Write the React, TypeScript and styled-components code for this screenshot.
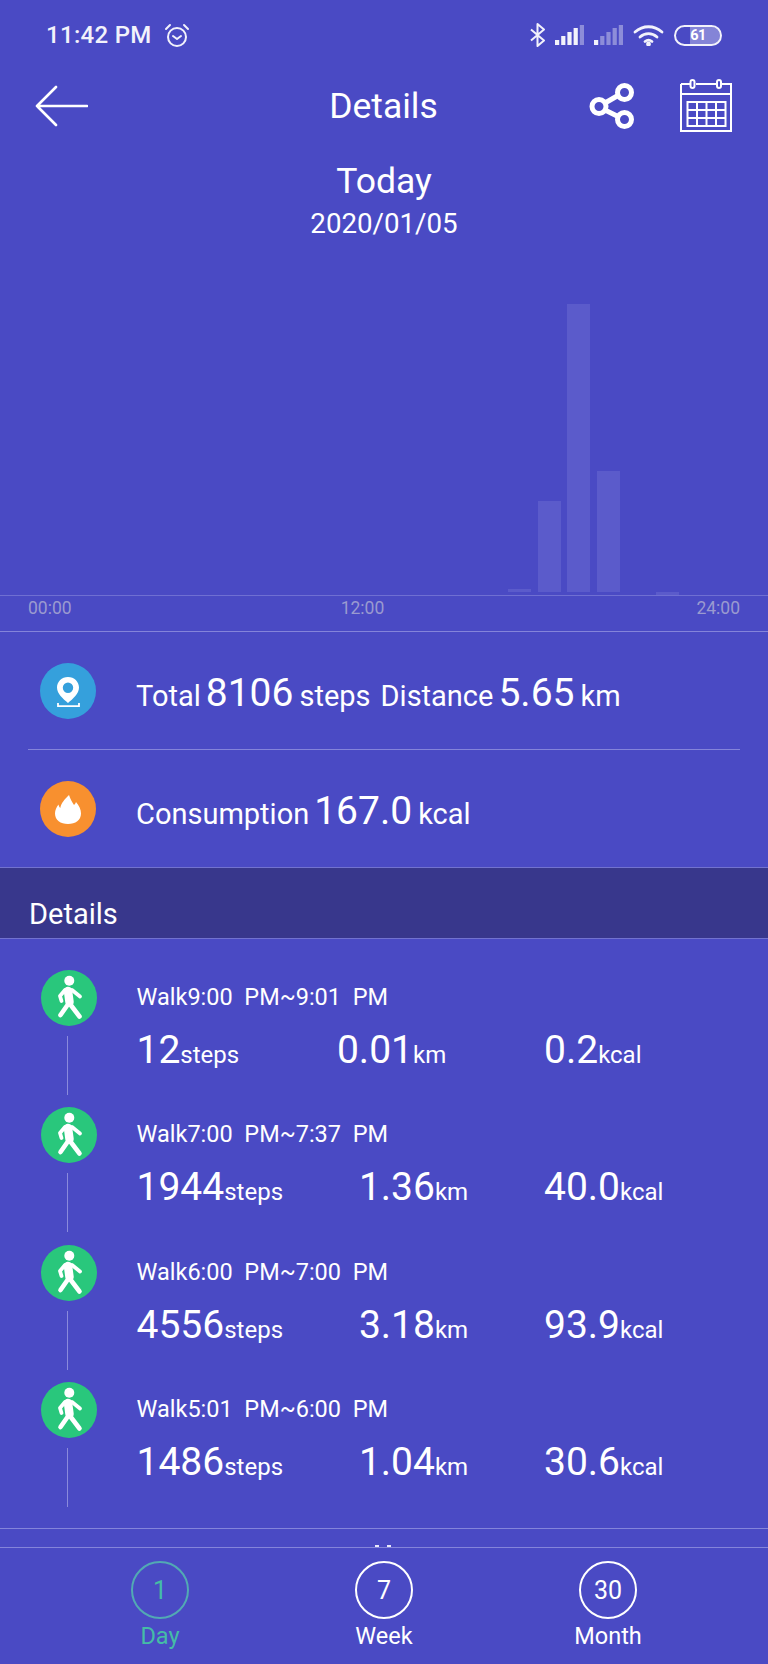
import React from 'react'
import styled, { createGlobalStyle } from 'styled-components'

const GlobalStyle = createGlobalStyle`
  html, body {
    margin: 0;
    padding: 0;
    background: #4a4ac4;
  }
  * {
    box-sizing: border-box;
  }
`

const Page = styled.div`
  width: 768px;
  height: 1664px;
  display: flex;
  flex-direction: column;
  overflow: hidden;
  background: #4a4ac4;
  color: #fff;
  font-family: Roboto, "Liberation Sans", sans-serif;
`

// status bar
const StatusBar = styled.div`
  height: 70px;
  flex: none;
  display: flex;
  align-items: center;
  justify-content: space-between;
  padding: 0 46px 0 46px;
`

const StatusLeft = styled.div`
  display: flex;
  align-items: center;
  gap: 12px;
`

const StatusTime = styled.span`
  font-size: 24px;
  font-weight: 500;
  letter-spacing: 0.3px;
  color: #f2f2fb;
`

const StatusRight = styled.div`
  display: flex;
  align-items: center;
  gap: 10px;
`

const Battery = styled.div`
  position: relative;
  width: 48px;
  height: 21px;
  border: 2.5px solid #f2f2fb;
  border-radius: 11px;
  overflow: hidden;
  display: flex;
  align-items: center;
  justify-content: center;
`

const BatteryFill = styled.div`
  position: absolute;
  top: 0;
  bottom: 0;
  left: 14px;
  right: 0;
  background: rgba(255, 255, 255, 0.32);
`

const BatteryLevel = styled.span`
  position: relative;
  top: 1px;
  font-size: 14.5px;
  font-weight: 700;
  letter-spacing: -0.6px;
  line-height: 1;
`

// title bar
const Header = styled.header`
  height: 71px;
  flex: none;
  display: grid;
  grid-template-columns: 1fr auto 1fr;
  align-items: center;
  padding: 0 36px 0 35px;
`

const HeaderTitle = styled.h1`
  margin: 0;
  font-size: 35.5px;
  font-weight: 400;
`

const HeaderActions = styled.div`
  display: flex;
  justify-content: flex-end;
  align-items: center;
  gap: 46px;
`

// day block
const DayBlock = styled.div`
  flex: none;
  height: 100px;
  padding-top: 17px;
  display: flex;
  flex-direction: column;
  align-items: center;
`

const DayName = styled.div`
  font-size: 35.5px;
  line-height: 46px;
`

const DayDate = styled.div`
  font-size: 27.7px;
  line-height: 36px;
  margin-top: 2px;
`

// chart
const Plot = styled.div`
  height: 355px;
  flex: none;
  display: flex;
  align-items: flex-end;
  padding: 0 26px 0 30px;
  border-bottom: 1px solid #6f6fd2;
`

const Slot = styled.div`
  flex: 1;
  display: flex;
  justify-content: center;
`

const Bar = styled.div<{ $height: number; $lift: number }>`
  width: 23px;
  height: ${({ $height }) => $height}px;
  margin-bottom: ${({ $lift }) => $lift}px;
  background: #5b5bcb;
`

const AxisLabels = styled.div`
  height: 36px;
  flex: none;
  display: flex;
  justify-content: space-between;
  padding: 0 28px;
  font-size: 17.5px;
  line-height: 24px;
  color: #9a9ad0;
  border-bottom: 1px solid #8484da;
`

const AxisMiddle = styled.span`
  margin-right: 43px;
`

// totals
const SummaryRow = styled.div`
  height: 117px;
  flex: none;
  display: flex;
  align-items: center;
  padding-left: 12px;
  margin: 0 28px;
  gap: 41px;
  & + & {
    height: 118px;
    border-top: 1px solid #8484da;
  }
`

const Badge = styled.div<{ $color: string }>`
  width: 56px;
  height: 56px;
  flex: none;
  border-radius: 50%;
  background: ${({ $color }) => $color};
  display: flex;
  align-items: center;
  justify-content: center;
`

const SummaryText = styled.div`
  font-size: 29px;
  display: flex;
  align-items: baseline;
  white-space: pre;
  margin-left: -1px;
  padding-top: 4px;
`

const SummaryValue = styled.span`
  font-size: 39px;
  margin: 0 6px 0 5px;
`

const SummarySpacer = styled.span`
  width: 10px;
`

const SectionBar = styled.div`
  height: 72px;
  flex: none;
  display: flex;
  align-items: flex-end;
  padding: 0 0 3px 29px;
  font-size: 29px;
  line-height: 42px;
  background: #38378c;
  border-top: 1px solid #7272cf;
  border-bottom: 1px solid #7272cf;
`

// walk list
const WalkList = styled.div`
  flex: 1;
  min-height: 0;
  overflow: hidden;
  padding-top: 31px;
`

const WalkRow = styled.div`
  height: 137.4px;
  display: flex;
  padding-left: 40px;
`

const WalkRail = styled.div`
  width: 57px;
  flex: none;
  display: flex;
  flex-direction: column;
  align-items: center;
  gap: 10px;
`

const WalkLine = styled.div`
  width: 1px;
  height: 59px;
  margin-right: 3px;
  background: #8a8adc;
`

const WalkBody = styled.div`
  flex: 1;
  padding: 11px 44px 0 39.5px;
`

const WalkTitle = styled.div`
  font-size: 23.5px;
  line-height: 32px;
  white-space: pre;
`

const WalkStats = styled.div`
  display: flex;
  align-items: baseline;
  margin-top: 14px;
`

const WalkStat = styled.div<{ $last?: boolean }>`
  flex: ${({ $last }) => ($last ? '0 0 180px' : '1 1 auto')};
  white-space: nowrap;
  font-size: 39px;
  line-height: 46px;
  small {
    font-size: 24px;
  }
`

const ListEnd = styled.div`
  height: 19px;
  margin-top: -1px;
  display: flex;
  justify-content: center;
  align-items: flex-end;
  gap: 8px;
  padding-right: 2px;
  border-top: 1px solid #8484da;
`

const ListEndTip = styled.span`
  width: 4px;
  height: 2px;
  background: #e8e8fa;
`

// period tabs
const TabBar = styled.nav`
  height: 117px;
  flex: none;
  display: grid;
  grid-template-columns: repeat(3, 224px);
  justify-content: center;
  padding-top: 13px;
  border-top: 1px solid #8484da;
`

const Tab = styled.div<{ $active?: boolean }>`
  display: flex;
  flex-direction: column;
  align-items: center;
  color: ${({ $active }) => ($active ? '#45bca6' : '#fff')};
`

const TabCircle = styled.div<{ $active?: boolean }>`
  width: 58px;
  height: 58px;
  border-radius: 50%;
  border: 2px solid ${({ $active }) => ($active ? '#52a9b4' : '#fff')};
  display: flex;
  align-items: center;
  justify-content: center;
  font-size: 25px;
`

const TabLabel = styled.div`
  font-size: 23.5px;
  line-height: 32px;
  margin-top: 1px;
`

const AlarmIcon = () => (
  <svg width="26" height="25" viewBox="0 0 26 25" fill="none" stroke="#f2f2fb" strokeWidth="2" strokeLinecap="round" strokeLinejoin="round">
    <circle cx="13" cy="14" r="9" />
    <path d="M9 13l4 3 4-3" />
    <path d="M2 6l4-4M24 6l-4-4" />
  </svg>
)

const BluetoothIcon = () => (
  <svg width="15" height="24" viewBox="0 0 15 24" fill="none" stroke="#f2f2fb" strokeWidth="2" strokeLinejoin="round">
    <path d="M1 6.5l13 11-6.5 5.5V1L14 6.5 1 17.500" />
  </svg>
)

const SignalIcon = ({ solid }: { solid: number }) => (
  <svg width="29" height="20" viewBox="0 0 29 20" fill="#f2f2fb">
    {[5, 9, 13, 17, 20].map((h, i) => (
      <rect key={i} x={i * 6.2} y={20 - h} width="4.200" height={h} opacity={i < solid ? 1 : 0.4} />
    ))}
  </svg>
)

const WifiIcon = () => (
  <svg width="31" height="21" viewBox="0 0 31 21" fill="none" stroke="#f2f2fb" strokeWidth="2.800" strokeLinecap="round">
    <path d="M2 7c8-7 19-7 27 0" />
    <path d="M7 12c5-4.500 12-4.500 17 0" />
    <path d="M12 16.500c2-1.500 5-1.500 7 0" />
    <circle cx="15.500" cy="19" r="1" fill="#f2f2fb" />
  </svg>
)

const BackIcon = () => (
  <svg width="53" height="42" viewBox="0 0 53 42" fill="none" stroke="#fff" strokeWidth="2.600" strokeLinecap="round" strokeLinejoin="round" style={{ display: 'block' }}>
    <path d="M2 21h50M21 2L2 21l19 19" />
  </svg>
)

const ShareIcon = () => (
  <svg width="45" height="46" viewBox="0 0 45 46" fill="none" stroke="#fff" strokeWidth="5">
    <path d="M16 20L29 12.500M16 27l13 6.500" />
    <circle cx="35.500" cy="9.500" r="7" />
    <circle cx="10" cy="23.500" r="7" />
    <circle cx="35.500" cy="36.500" r="7" />
  </svg>
)

const CalendarIcon = () => (
  <svg width="52" height="53" viewBox="0 0 52 53" fill="none" stroke="#fff" strokeWidth="2">
    <path d="M1 5h9M16 5h20M42 5h9v47H1V5" />
    <path d="M1 15h50" />
    <rect x="10.500" y="1" width="4" height="8" rx="2" />
    <rect x="37" y="1" width="4" height="8" rx="2" />
    <path d="M7.500 23h38v24h-38zM7.500 31h38M7.500 39h38M17 23v24M26.500 23v24M36 23v24" />
  </svg>
)

const PinIcon = () => (
  <svg width="56" height="56" viewBox="0 0 56 56" fill="none">
    <path fillRule="evenodd" fill="#fff" d="M28 14c6.300 0 11 4.800 11 10.600 0 6-6 11.400-11 15.400-5-4-11-9.400-11-15.400C17 18.800 21.700 14 28 14zm0 5.500a5.200 5.200 0 100 10.400 5.200 5.200 0 000-10.400z" />
    <path d="M18 40v3.200h21V40" stroke="#fff" strokeWidth="1.800" />
  </svg>
)

const FlameIcon = () => (
  <svg width="56" height="56" viewBox="0 0 56 56">
    <path fill="#fff" d="M29 14c1.500 4.500 3 7 5 10 1-.8 1.500-1.800 2-3 3 3.500 5 7.500 5 11.500C41 39 35.500 43 28 43s-13-4-13-10.500c0-3.500 1.500-6.500 3.500-9 .3 1.500.8 2.700 1.800 3.500C21 22 25 18 29 14z" />
  </svg>
)

const WalkerIcon = () => (
  <svg width="56" height="56" viewBox="0 0 56 56" fill="none" stroke="#fff" strokeLinecap="round" strokeLinejoin="round">
    <circle cx="28.300" cy="10.700" r="5" fill="#fff" stroke="none" />
    <path d="M27 21L28.500 32" strokeWidth="8.500" />
    <path d="M24 20l-5 6 1.500 5M31 20l8 6.500" strokeWidth="3.800" />
    <path d="M26.500 35L19.500 45M29 34l9.500 12.500" strokeWidth="4.600" />
  </svg>
)

const bars = [
  { hour: 16, height: 3, lift: 3 },
  { hour: 17, height: 91, lift: 3 },
  { hour: 18, height: 288, lift: 3 },
  { hour: 19, height: 121, lift: 3 },
  { hour: 21, height: 3, lift: 0 },
]

const walks = [
  { time: '9:00  PM~9:01  PM', steps: '12', km: '0.01', kcal: '0.2' },
  { time: '7:00  PM~7:37  PM', steps: '1944', km: '1.36', kcal: '40.0' },
  { time: '6:00  PM~7:00  PM', steps: '4556', km: '3.18', kcal: '93.9' },
  { time: '5:01  PM~6:00  PM', steps: '1486', km: '1.04', kcal: '30.6' },
]

const tabs = [
  { value: '1', label: 'Day', active: true },
  { value: '7', label: 'Week', active: false },
  { value: '30', label: 'Month', active: false },
]

const App = () => {
  return (
    <Page>
      <GlobalStyle />
      <StatusBar>
        <StatusLeft>
          <StatusTime>11:42 PM</StatusTime>
          <AlarmIcon />
        </StatusLeft>
        <StatusRight>
          <BluetoothIcon />
          <SignalIcon solid={4} />
          <SignalIcon solid={1} />
          <WifiIcon />
          <Battery>
            <BatteryFill />
            <BatteryLevel>61</BatteryLevel>
          </Battery>
        </StatusRight>
      </StatusBar>

      <Header>
        <BackIcon />
        <HeaderTitle>Details</HeaderTitle>
        <HeaderActions>
          <ShareIcon />
          <CalendarIcon />
        </HeaderActions>
      </Header>

      <DayBlock>
        <DayName>Today</DayName>
        <DayDate>2020/01/05</DayDate>
      </DayBlock>

      <Plot>
        {Array.from({ length: 24 }, (_, hour) => {
          const bar = bars.find(b => b.hour === hour)
          return <Slot key={hour}>{bar && <Bar $height={bar.height} $lift={bar.lift} />}</Slot>
        })}
      </Plot>
      <AxisLabels>
        <span>00:00</span>
        <AxisMiddle>12:00</AxisMiddle>
        <span>24:00</span>
      </AxisLabels>

      <SummaryRow>
        <Badge $color="#35a0dc">
          <PinIcon />
        </Badge>
        <SummaryText>
          Total<SummaryValue>8106</SummaryValue>steps<SummarySpacer />Distance<SummaryValue>5.65</SummaryValue>km
        </SummaryText>
      </SummaryRow>
      <SummaryRow>
        <Badge $color="#f8902f">
          <FlameIcon />
        </Badge>
        <SummaryText>
          Consumption<SummaryValue>167.0</SummaryValue>kcal
        </SummaryText>
      </SummaryRow>

      <SectionBar>Details</SectionBar>

      <WalkList>
        {walks.map(walk => (
          <WalkRow key={walk.time}>
            <WalkRail>
              <Badge $color="#29c77c">
                <WalkerIcon />
              </Badge>
              <WalkLine />
            </WalkRail>
            <WalkBody>
              <WalkTitle>Walk{walk.time}</WalkTitle>
              <WalkStats>
                <WalkStat>{walk.steps}<small>steps</small></WalkStat>
                <WalkStat>{walk.km}<small>km</small></WalkStat>
                <WalkStat $last>{walk.kcal}<small>kcal</small></WalkStat>
              </WalkStats>
            </WalkBody>
          </WalkRow>
        ))}
      </WalkList>
      <ListEnd>
        <ListEndTip />
        <ListEndTip />
      </ListEnd>

      <TabBar>
        {tabs.map(tab => (
          <Tab key={tab.label} $active={tab.active}>
            <TabCircle $active={tab.active}>{tab.value}</TabCircle>
            <TabLabel>{tab.label}</TabLabel>
          </Tab>
        ))}
      </TabBar>
    </Page>
  )
}

export default App
